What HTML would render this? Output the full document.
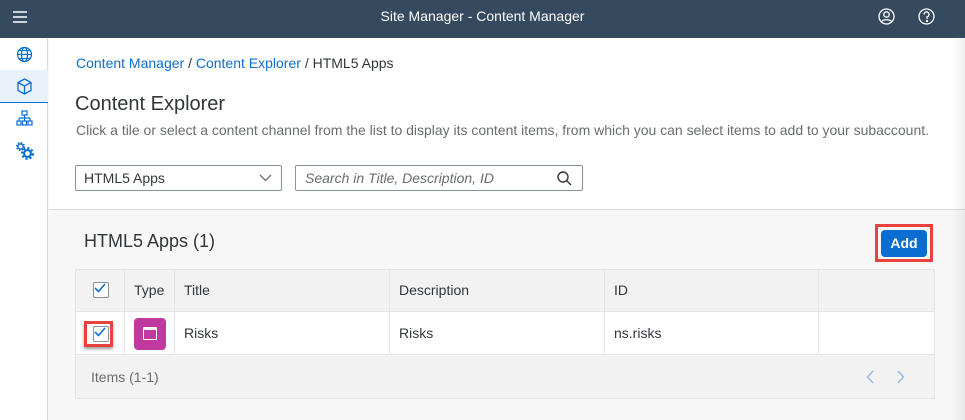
<!DOCTYPE html><html><head><style>
*{box-sizing:border-box;margin:0;padding:0}
body{width:965px;height:420px;overflow:hidden;font-family:"Liberation Sans",Arial,sans-serif;background:#f7f7f7;position:relative;color:#32363a}
.hdr{position:absolute;left:0;top:0;width:965px;height:38px;background:#354a5f;color:#fff;font-size:14px;text-align:center;line-height:33px}
.side{position:absolute;left:0;top:38px;width:48px;height:382px;background:#fff;border-right:1px solid #d9d9d9}
.top{position:absolute;left:49px;top:38px;width:916px;height:172px;background:#fff;border-bottom:1px solid #d9d9d9}
.a{position:absolute;white-space:nowrap}
.cell{position:absolute;border-right:1px solid #e5e5e5;height:100%;top:0}
.cb{position:absolute;width:16px;height:16px;border:1px solid #89919a;border-radius:2px;background:#fff}
</style></head><body>
<div class="hdr">Site Manager - Content Manager
<svg class="a" style="left:12px;top:10px" width="16" height="14"><path d="M1 2h14M1 7h14M1 12h14" stroke="#fff" stroke-width="1.6"/></svg>
<svg class="a" style="left:878px;top:8px" width="17" height="17" fill="none" stroke="#fff" stroke-width="1.3"><circle cx="8.5" cy="8.5" r="7.5"/><circle cx="8.5" cy="6.5" r="2.7"/><path d="M3.5 14c1-3 9-3 10 0"/></svg>
<svg class="a" style="left:918px;top:8px" width="17" height="17" fill="none" stroke="#fff" stroke-width="1.3"><circle cx="8.5" cy="8.5" r="7.5"/><path d="M6 6.5a2.5 2.5 0 1 1 3 2.4v2"/><circle cx="9" cy="13" r=".5"/></svg>
</div>
<div class="side">
<div class="a" style="left:0;top:32px;width:48px;height:33px;background:#e8f0f9;border-bottom:1px solid #0a6ed1"></div>
<svg class="a" style="left:16px;top:8px" width="17" height="17" fill="none" stroke="#0a6ed1" stroke-width="1.2"><circle cx="8.5" cy="8.5" r="7"/><ellipse cx="8.5" cy="8.5" rx="3" ry="7"/><path d="M1.5 8.5h14M3 4.5h11M3 12.5h11"/></svg>
<svg class="a" style="left:17px;top:40px" width="15" height="17" fill="none" stroke="#0a6ed1" stroke-width="1.3"><path d="M7.5 1L14 4.5v8L7.5 16 1 12.5v-8z M1 4.5l6.5 3.5 6.5-3.5M7.5 8v8"/></svg>
<svg class="a" style="left:16px;top:72px" width="17" height="16" fill="none" stroke="#0a6ed1" stroke-width="1.2"><rect x="6" y="1" width="5" height="4"/><path d="M8.5 5v3M3 8h11M3 8v3M8.5 8v3M14 8v3"/><rect x="1" y="11" width="4" height="4"/><rect x="6.5" y="11" width="4" height="4"/><rect x="12" y="11" width="4" height="4"/></svg>
<svg class="a" style="left:16px;top:104px" width="18" height="18"><circle cx="4.5" cy="4.5" r="2.6" fill="none" stroke="#0a6ed1" stroke-width="1.4"/><circle cx="4.5" cy="4.5" r="3.8" fill="none" stroke="#0a6ed1" stroke-width="1.6" stroke-dasharray="1.5 1.5"/><circle cx="11.5" cy="11.5" r="3.4" fill="none" stroke="#0a6ed1" stroke-width="2"/><circle cx="11.5" cy="11.5" r="5.3" fill="none" stroke="#0a6ed1" stroke-width="2.2" stroke-dasharray="2.2 1.9"/></svg>
</div>
<div class="top">
<div class="a" style="left:27px;top:17px;font-size:14px;color:#0a6ed1">Content Manager <span style="color:#32363a">/</span> Content Explorer <span style="color:#32363a">/ HTML5 Apps</span></div>
<div class="a" style="left:26px;top:55px;font-size:20px">Content Explorer</div>
<div class="a" style="left:27px;top:84px;font-size:14px;color:#6a6d70;letter-spacing:-0.01px">Click a tile or select a content channel from the list to display its content items, from which you can select items to add to your subaccount.</div>
<div class="a" style="left:26px;top:127px;width:207px;height:26px;border:1px solid #89919a;border-radius:2px;font-size:14px;padding:4px 8px">HTML5 Apps
<svg class="a" style="right:9px;top:8px" width="13" height="8" fill="none" stroke="#6a6d70" stroke-width="1.3"><path d="M1 1l5.5 5.5L12 1"/></svg></div>
<div class="a" style="left:246px;top:127px;width:288px;height:26px;border:1px solid #89919a;border-radius:2px;font-size:14px;padding:4px 9px;font-style:italic;color:#6a6d70">Search in Title, Description, ID
<svg class="a" style="right:10px;top:5px" width="15" height="15" fill="none" stroke="#32363a" stroke-width="1.4"><circle cx="6" cy="6" r="5"/><path d="M9.5 9.5l4.5 4.5"/></svg></div>
</div>
<div class="a" style="left:950px;top:38px;width:15px;height:382px;background:linear-gradient(90deg,rgba(0,0,0,0),rgba(0,0,0,0.06))"></div>
<div class="a" style="left:84px;top:231px;font-size:18px">HTML5 Apps (1)</div>
<div class="a" style="left:875px;top:224px;width:58px;height:38px;border:3px solid #e9413e"></div>
<div class="a" style="left:881px;top:230px;width:46px;height:27px;background:#0a6ed1;border-radius:4px;color:#fff;font-weight:bold;font-size:14px;text-align:center;line-height:26px">Add</div>
<div class="a" style="left:75px;top:269px;width:860px;height:130px;border:1px solid #e5e5e5;background:#f2f2f2">
<div class="a" style="left:0;top:0;width:858px;height:41px;font-size:14px">
<div class="cell" style="left:0;width:49px"></div><div class="cell" style="left:49px;width:50px"></div><div class="cell" style="left:99px;width:215px"></div><div class="cell" style="left:314px;width:215px"></div><div class="cell" style="left:529px;width:214px"></div>
<div class="cb" style="left:17px;top:12px"></div>
<div class="a" style="left:58px;top:12px">Type</div><div class="a" style="left:108px;top:12px">Title</div><div class="a" style="left:323px;top:12px">Description</div><div class="a" style="left:538px;top:12px">ID</div>
</div>
<div class="a" style="left:0;top:41px;width:858px;height:44px;background:#fff;border-top:1px solid #e5e5e5;border-bottom:1px solid #e5e5e5;font-size:14px">
<div class="cell" style="left:0;width:49px"></div><div class="cell" style="left:49px;width:50px"></div><div class="cell" style="left:99px;width:215px"></div><div class="cell" style="left:314px;width:215px"></div><div class="cell" style="left:529px;width:214px"></div>
<div class="a" style="left:8px;top:9px;width:29px;height:26px;border:3px solid #e9413e;box-shadow:0 2px 3px rgba(0,0,0,.4)"></div>
<div class="cb" style="left:17px;top:14px"></div>
<div class="a" style="left:58px;top:6px;width:32px;height:32px;background:#c0399f;border-radius:4px"><div class="a" style="left:9px;top:9px;width:14px;height:13px;border:1.5px solid #fff;border-top-width:3px;border-radius:1px"></div></div>
<div class="a" style="left:108px;top:13px">Risks</div><div class="a" style="left:323px;top:13px">Risks</div><div class="a" style="left:538px;top:13px">ns.risks</div>
</div>
<div class="a" style="left:15px;top:99px;font-size:14px;color:#6a6d70">Items (1-1)</div>
<svg class="a" style="left:790px;top:99px" width="40" height="16" fill="none" stroke="#8fb9e6" stroke-width="1.4"><path d="M7 2L1.5 8 7 14M32 2l5.5 6L32 14"/></svg>
</div>
<svg class="a" style="left:94px;top:283px" width="12" height="10" fill="none" stroke="#0a6ed1" stroke-width="1.6"><path d="M1 5l3.5 3.5L11 1"/></svg>
<svg class="a" style="left:94px;top:327px" width="12" height="10" fill="none" stroke="#0a6ed1" stroke-width="1.6"><path d="M1 5l3.5 3.5L11 1"/></svg>
</body></html>
